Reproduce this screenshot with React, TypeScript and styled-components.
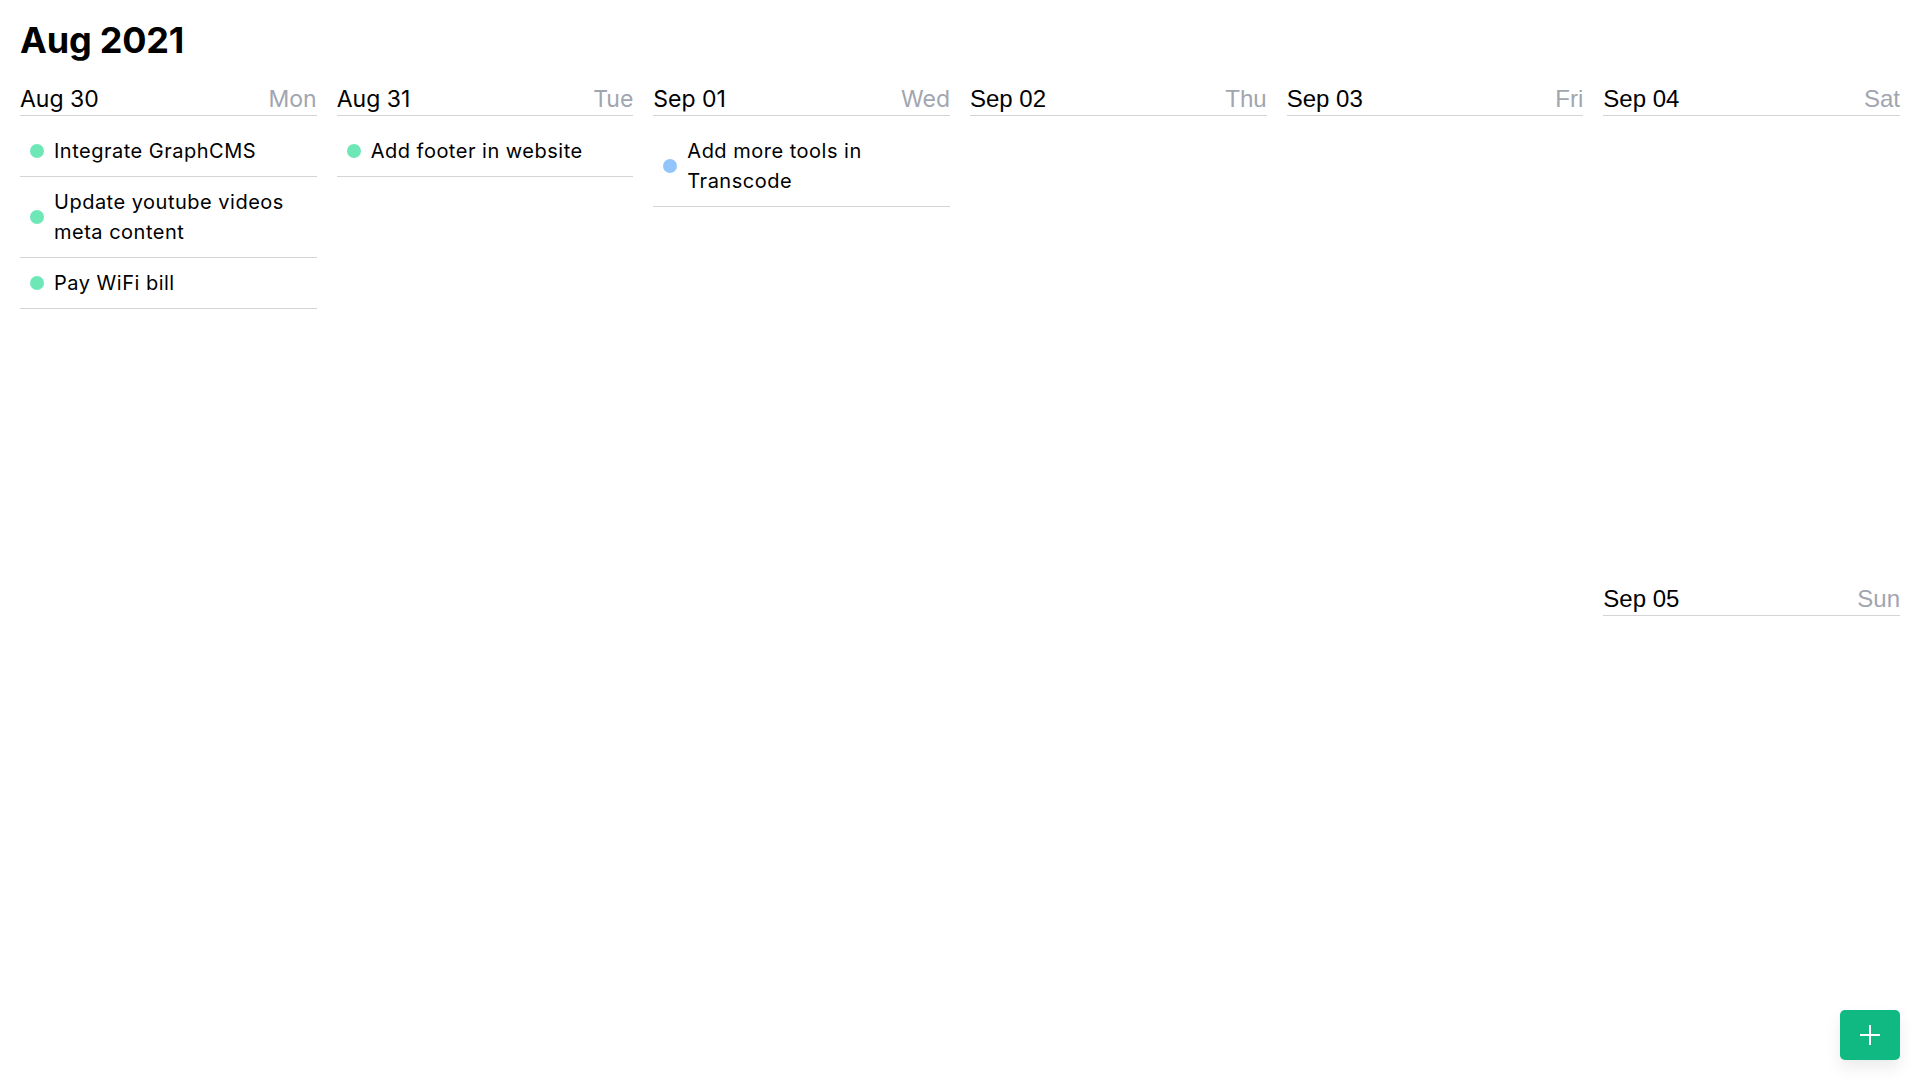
import React from "react"
import styled, { createGlobalStyle } from "styled-components"

const GlobalStyle = createGlobalStyle`
  * { box-sizing: border-box; }
  html, body { margin: 0; padding: 0; background: #fff; }
  body {
    font-family: Inter, "Noto Sans", sans-serif;
    color: #000;
  }
`

const SPage = styled.div`
  padding: 0 20px;
  height: 100vh;
  display: flex;
  flex-direction: column;
`

const STitle = styled.h1`
  margin: 0;
  padding-top: 20px;
  height: 81px;
  font-size: 36px;
  line-height: 40px;
  font-weight: 700;
  letter-spacing: -0.2px;
`

const SWeek = styled.div`
  flex: 1;
  display: grid;
  grid-template-columns: repeat(6, 1fr);
  grid-template-rows: repeat(2, 1fr);
  column-gap: 20px;
`

const SDay = styled.div<{ $plain?: boolean; $half?: boolean }>`
  grid-row: ${(p) => (p.$half ? "auto" : "span 2")};
  display: flex;
  flex-direction: column;
  min-width: 0;
  font-family: ${(p) => (p.$plain ? `"Liberation Sans", Arial, sans-serif` : `Inter, "Noto Sans", sans-serif`)};
`

const SDayHeader = styled.div<{ $plain?: boolean }>`
  display: flex;
  justify-content: space-between;
  align-items: baseline;
  height: 35px;
  padding-top: 2px;
  border-bottom: 1px solid #d4d4d8;
  font-size: ${(p) => (p.$plain ? "24px" : "23px")};
  line-height: 32px;
`

const SDayName = styled.span`
  color: #a1a5b0;
`

const STaskList = styled.ul`
  list-style: none;
  margin: 0;
  padding: 10px 0 0;
`

const STask = styled.li`
  display: flex;
  align-items: center;
  gap: 10px;
  padding: 10px 10px 10px 10px;
  border-bottom: 1px solid #d4d4d8;
  font-size: 20px;
  line-height: 30px;
  letter-spacing: 0.5px;
`

const SDot = styled.span<{ $color: string }>`
  flex: none;
  width: 14px;
  height: 14px;
  border-radius: 50%;
  background: ${(p) => p.$color};
`

const SAddButton = styled.button`
  position: fixed;
  right: 20px;
  bottom: 20px;
  width: 60px;
  height: 50px;
  border: none;
  border-radius: 5px;
  background: #10b981;
  box-shadow: 0 8px 16px rgba(0, 0, 0, 0.08);
  display: flex;
  align-items: center;
  justify-content: center;
  cursor: pointer;
`

const GREEN = "#6ee7b7"
const BLUE = "#93c5fd"

type Task = { title: string; color: string }
type Day = { date: string; name: string; tasks: Task[]; plain?: boolean; half?: boolean }

const days: Day[] = [
  {
    date: "Aug 30",
    name: "Mon",
    tasks: [
      { title: "Integrate GraphCMS", color: GREEN },
      { title: "Update youtube videos meta content", color: GREEN },
      { title: "Pay WiFi bill", color: GREEN },
    ],
  },
  { date: "Aug 31", name: "Tue", tasks: [{ title: "Add footer in website", color: GREEN }] },
  { date: "Sep 01", name: "Wed", tasks: [{ title: "Add more tools in Transcode", color: BLUE }] },
  { date: "Sep 02", name: "Thu", tasks: [], plain: true },
  { date: "Sep 03", name: "Fri", tasks: [], plain: true },
  { date: "Sep 04", name: "Sat", tasks: [], plain: true, half: true },
]

const sunday: Day = { date: "Sep 05", name: "Sun", tasks: [], plain: true, half: true }

function DayColumn({ day }: { day: Day }) {
  return (
    <SDay $plain={day.plain} $half={day.half}>
      <SDayHeader $plain={day.plain}>
        <span>{day.date}</span>
        <SDayName>{day.name}</SDayName>
      </SDayHeader>
      {day.tasks.length > 0 && (
        <STaskList>
          {day.tasks.map((t) => (
            <STask key={t.title}>
              <SDot $color={t.color} />
              <span>{t.title}</span>
            </STask>
          ))}
        </STaskList>
      )}
    </SDay>
  )
}

const SSunday = styled(SDay)`
  grid-column: 6;
  grid-row: 2;
`

export default function App() {
  return (
    <>
      <GlobalStyle />
      <SPage>
        <STitle>Aug 2021</STitle>
        <SWeek>
          {days.map((d) => (
            <DayColumn key={d.date} day={d} />
          ))}
          <SSunday $plain $half>
            <SDayHeader $plain>
              <span>{sunday.date}</span>
              <SDayName>{sunday.name}</SDayName>
            </SDayHeader>
          </SSunday>
        </SWeek>
      </SPage>
      <SAddButton aria-label="Add task">
        <svg width="22" height="22" viewBox="0 0 22 22" fill="none" stroke="#fff" strokeWidth="2">
          <path d="M11 1v20M1 11h20" />
        </svg>
      </SAddButton>
    </>
  )
}
